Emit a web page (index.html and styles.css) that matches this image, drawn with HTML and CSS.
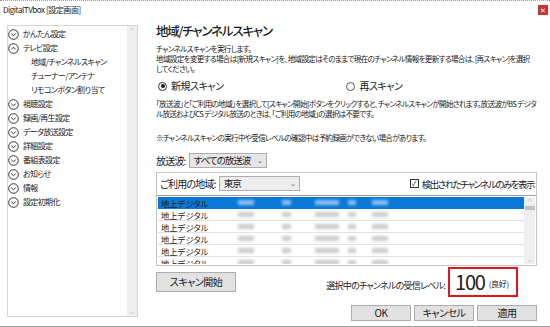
FILE: index.html
```html
<!DOCTYPE html>
<html lang="ja">
<head>
<meta charset="UTF-8">
<title>DigitalTVbox [設定画面]</title>
<link rel="stylesheet" href="styles.css">
</head>
<body>
<div class="window">
  <div class="titlebar">
    <span class="title">DigitalTVbox [設定画面]</span>
    <span class="close">&#x2715;</span>
  </div>

  <div class="content">
    <div class="nav">
      <ul class="nav-list">
        <li class="nav-item"><svg class="ico" viewBox="0 0 11 11"><circle cx="5.5" cy="5.5" r="4.8"/><path d="M3.2 4.5 5.5 6.8 7.8 4.5"/></svg>かんたん設定</li>
        <li class="nav-item"><svg class="ico" viewBox="0 0 11 11"><circle cx="5.5" cy="5.5" r="4.8"/><path d="M3.2 6.5 5.5 4.2 7.8 6.5"/></svg>テレビ設定</li>
        <li class="nav-item sub">地域/チャンネルスキャン</li>
        <li class="nav-item sub">チューナー/アンテナ</li>
        <li class="nav-item sub">リモコンボタン割り当て</li>
        <li class="nav-item"><svg class="ico" viewBox="0 0 11 11"><circle cx="5.5" cy="5.5" r="4.8"/><path d="M3.2 4.5 5.5 6.8 7.8 4.5"/></svg>視聴設定</li>
        <li class="nav-item"><svg class="ico" viewBox="0 0 11 11"><circle cx="5.5" cy="5.5" r="4.8"/><path d="M3.2 4.5 5.5 6.8 7.8 4.5"/></svg>録画/再生設定</li>
        <li class="nav-item"><svg class="ico" viewBox="0 0 11 11"><circle cx="5.5" cy="5.5" r="4.8"/><path d="M3.2 4.5 5.5 6.8 7.8 4.5"/></svg>データ放送設定</li>
        <li class="nav-item"><svg class="ico" viewBox="0 0 11 11"><circle cx="5.5" cy="5.5" r="4.8"/><path d="M3.2 4.5 5.5 6.8 7.8 4.5"/></svg>詳細設定</li>
        <li class="nav-item"><svg class="ico" viewBox="0 0 11 11"><circle cx="5.5" cy="5.5" r="4.8"/><path d="M3.2 4.5 5.5 6.8 7.8 4.5"/></svg>番組表設定</li>
        <li class="nav-item"><svg class="ico" viewBox="0 0 11 11"><circle cx="5.5" cy="5.5" r="4.8"/><path d="M3.2 4.5 5.5 6.8 7.8 4.5"/></svg>お知らせ</li>
        <li class="nav-item"><svg class="ico" viewBox="0 0 11 11"><circle cx="5.5" cy="5.5" r="4.8"/><path d="M3.2 4.5 5.5 6.8 7.8 4.5"/></svg>情報</li>
        <li class="nav-item"><svg class="ico" viewBox="0 0 11 11"><circle cx="5.5" cy="5.5" r="4.8"/><path d="M3.2 4.5 5.5 6.8 7.8 4.5"/></svg>設定初期化</li>
      </ul>
      <div class="vscroll">
        <span class="arrow">&#x2303;</span>
        <span class="arrow">&#x2304;</span>
      </div>
    </div>

    <div class="main">
      <h1>地域/チャンネルスキャン</h1>
      <p class="intro">チャンネルスキャンを実行します。<br>地域設定を変更する場合は[新規スキャン]を、地域設定はそのままで現在のチャンネル情報を更新する場合は、[再スキャン]を選択<br>してください。</p>

      <div class="radios">
        <label class="radio checked"><span class="dot"></span>新規スキャン</label>
        <label class="radio"><span class="dot"></span>再スキャン</label>
      </div>

      <p class="desc">「放送波」と「ご利用の地域」を選択して[スキャン開始]ボタンをクリックすると、チャンネルスキャンが開始されます。放送波がBS デジタ<br>ル放送およびCS デジタル放送のときは、「ご利用の地域」の選択は不要です。</p>
      <p class="note">※チャンネルスキャンの実行中や受信レベルの確認中は予約録画ができない場合があります。</p>

      <div class="field">
        <span class="label">放送波:</span>
        <span class="select wide">すべての放送波<span class="caret">&#x2304;</span></span>
      </div>

      <div class="group">
        <div class="group-head">
          <span class="label">ご利用の地域:</span>
          <span class="select">東京<span class="caret">&#x2304;</span></span>
          <label class="check"><span class="box">&#x2713;</span>検出されたチャンネルのみを表示</label>
        </div>
        <div class="list">
          <div class="rows">
            <div class="row selected"><span class="cell">地上デジタル</span><span class="blur b1"></span><span class="blur b2"></span><span class="blur b3"></span><span class="blur b4"></span><span class="blur b5"></span></div>
            <div class="row"><span class="cell">地上デジタル</span><span class="blur b1"></span><span class="blur b2"></span><span class="blur b3"></span><span class="blur b4"></span><span class="blur b5"></span></div>
            <div class="row"><span class="cell">地上デジタル</span><span class="blur b1"></span><span class="blur b2"></span><span class="blur b3"></span><span class="blur b4"></span><span class="blur b5"></span></div>
            <div class="row"><span class="cell">地上デジタル</span><span class="blur b1"></span><span class="blur b2"></span><span class="blur b3"></span><span class="blur b4"></span><span class="blur b5"></span></div>
            <div class="row"><span class="cell">地上デジタル</span><span class="blur b1"></span><span class="blur b2"></span><span class="blur b3"></span><span class="blur b4"></span><span class="blur b5"></span></div>
            <div class="row"><span class="cell">地上デジタル</span><span class="blur b1"></span><span class="blur b2"></span><span class="blur b3"></span><span class="blur b4"></span><span class="blur b5"></span></div>
          </div>
          <div class="vscroll small">
            <span class="arrow">&#x2303;</span>
            <span class="thumb"></span>
            <span class="arrow">&#x2304;</span>
          </div>
        </div>
      </div>

      <div class="scan-row">
        <button class="btn scan">スキャン開始</button>
        <div class="level">
          <span class="level-label">選択中のチャンネルの受信レベル:</span>
          <span class="level-box"><span class="num">100</span><span class="state">(良好)</span></span>
        </div>
      </div>

      <div class="actions">
        <button class="btn">OK</button>
        <button class="btn">キャンセル</button>
        <button class="btn">適用</button>
      </div>
    </div>
  </div>
</div>
</body>
</html>
```

FILE: styles.css
```css
* {
  box-sizing: border-box;
}

body {
  margin: 0;
  background: #ffffff;
  font-family: "Noto Sans CJK JP", sans-serif;
  font-feature-settings: "palt";
  color: #1a1a1a;
}

.window {
  width: 550px;
  height: 327px;
  border-top: 1px dotted #9a9a9a;
  border-bottom: 1px solid #a0a0a0;
  overflow: hidden;
}

.titlebar {
  height: 17px;
  display: flex;
  align-items: center;
  justify-content: space-between;
  padding: 0 2px 0 3px;
}

.title {
  font-size: 8px;
  line-height: 12px;
  letter-spacing: -0.45px;
}

.close {
  width: 10px;
  height: 10px;
  background: #c8333a;
  color: #fff;
  font-size: 7px;
  line-height: 10px;
  display: flex;
  align-items: center;
  justify-content: center;
}

.content {
  display: flex;
  padding-top: 7px;
}

/* left tree */
.nav {
  margin-left: 7px;
  width: 131px;
  height: 292px;
  border: 1px solid #d4d4d4;
  display: flex;
}

.nav-list {
  list-style: none;
  margin: 0;
  padding: 1px 0 0 0;
  flex: 1;
}

.nav-item {
  height: 14px;
  display: flex;
  align-items: center;
  font-size: 8px;
  line-height: 12px;
  letter-spacing: -0.65px;
  white-space: nowrap;
}

.nav-item.sub {
  padding-left: 23px;
}

.ico {
  width: 11px;
  height: 11px;
  margin-right: 4px;
  fill: none;
  stroke: #333;
  stroke-width: 1;
}

.vscroll {
  width: 10px;
  background: #efefef;
  display: flex;
  flex-direction: column;
  justify-content: space-between;
  align-items: center;
  color: #b5b5b5;
  font-size: 7px;
  line-height: 9px;
}

/* right pane */
.main {
  margin-left: 18px;
  width: 381px;
}

h1 {
  margin: -1px 0 0 0;
  height: 14px;
  font-size: 12.5px;
  font-weight: 500;
  line-height: 14px;
  letter-spacing: -1.2px;
}

.intro,
.desc,
.note {
  margin: 0;
  font-size: 7.6px;
  line-height: 10px;
  letter-spacing: -0.7px;
  white-space: nowrap;
}

.intro {
  margin-top: 6px;
  height: 30px;
}

.radios {
  display: flex;
  height: 14px;
  align-items: center;
  margin-top: 5px;
  font-size: 10px;
  line-height: 14px;
  letter-spacing: -0.5px;
}

.radio {
  display: flex;
  align-items: center;
  margin-left: 2px;
}

.radio + .radio {
  margin-left: 123px;
}

.dot {
  width: 9px;
  height: 9px;
  border: 1px solid #333;
  border-radius: 50%;
  margin-right: 4px;
  position: relative;
}

.radio + .radio .dot {
  border-color: #555;
}

.radio.checked .dot::after {
  content: "";
  position: absolute;
  left: 1.5px;
  top: 1.5px;
  width: 4px;
  height: 4px;
  border-radius: 50%;
  background: #1a1a1a;
}

.desc {
  margin-top: 6px;
  height: 20px;
}

.note {
  margin-top: 14px;
  height: 10px;
}

.field {
  display: flex;
  align-items: center;
  margin-top: 10px;
  height: 15px;
}

.label {
  font-size: 10px;
  line-height: 14px;
  margin-right: 3px;
  letter-spacing: -0.8px;
  white-space: nowrap;
}

.select {
  height: 15px;
  width: 81px;
  border: 1px solid #adadad;
  background: #e6e6e6;
  font-size: 9.5px;
  line-height: 13px;
  white-space: nowrap;
  display: flex;
  align-items: center;
  justify-content: space-between;
  padding: 0 4px 0 4px;
  letter-spacing: -1px;
}

.select.wide {
  width: 78px;
}

.caret {
  font-size: 7px;
  color: #555;
}

.group {
  margin-top: 4px;
  border: 1px solid #c4c4c4;
  height: 94px;
  display: flex;
  flex-direction: column;
}

.group-head {
  display: flex;
  align-items: center;
  height: 22px;
  padding: 0 2px 1px 3px;
}

.group-head .select {
  width: 81px;
  background: #ededed;
}

.check {
  margin-left: auto;
  display: flex;
  align-items: center;
  font-size: 9.5px;
  line-height: 14px;
  letter-spacing: -1.5px;
  white-space: nowrap;
}

.box {
  width: 9px;
  height: 9px;
  border: 1px solid #333;
  font-size: 7px;
  line-height: 7px;
  display: flex;
  align-items: center;
  justify-content: center;
  margin-right: 3px;
  letter-spacing: 0;
}

.list {
  flex: 1;
  border-top: 1px solid #9c9c9c;
  display: flex;
  padding: 1px;
  overflow: hidden;
}

.rows {
  flex: 1;
  overflow: hidden;
}

.row {
  height: 12px;
  box-shadow: inset 0 -1px 0 #e3e3e3;
  display: flex;
  align-items: center;
  position: relative;
  white-space: nowrap;
}

.row.selected {
  background: #0a78d6;
  box-shadow: none;
}

.cell {
  width: 64px;
  height: 12px;
  padding-left: 3px;
  font-size: 8.3px;
  line-height: 12px;
  letter-spacing: 0;
  background: #fff;
  box-shadow: inset 0 -1px 0 #e3e3e3;
}

.row.selected .cell {
  background: #0a78d6;
  box-shadow: none;
}

.blur {
  position: absolute;
  top: 3px;
  height: 5px;
  background: #cdcdcd;
  filter: blur(1.5px);
}

.row.selected .blur {
  background: #8fc0ee;
}

.b1 { left: 80px; width: 16px; }
.b2 { left: 124px; width: 9px; }
.b3 { left: 157px; width: 24px; }
.b4 { left: 190px; width: 8px; }
.b5 { left: 214px; width: 16px; }

.vscroll.small {
  width: 11px;
  justify-content: flex-start;
}

.vscroll.small .arrow:last-child {
  margin-top: auto;
}

.thumb {
  width: 10px;
  height: 4px;
  background: #c2c2c2;
}

.scan-row {
  display: flex;
  align-items: center;
  justify-content: space-between;
  height: 31px;
}

.btn {
  font-family: inherit;
  font-feature-settings: "palt";
  background: #e1e1e1;
  border: 1px solid #adadad;
  color: #1a1a1a;
  font-size: 10px;
  line-height: 12px;
  letter-spacing: -0.5px;
  padding: 0;
  height: 16px;
}

.scan {
  width: 80px;
  height: 20px;
}

.level {
  display: flex;
  align-items: center;
  margin-right: 19px;
}

.level-label {
  font-size: 9px;
  line-height: 12px;
  letter-spacing: -0.75px;
  margin-top: 9px;
  margin-right: 3px;
  white-space: nowrap;
}

.level-box {
  width: 70px;
  height: 30px;
  border: 2px solid #e3141f;
  display: flex;
  align-items: center;
  padding-left: 5px;
}

.num {
  font-size: 20px;
  line-height: 24px;
  letter-spacing: -1.2px;
}

.state {
  font-size: 8px;
  line-height: 12px;
  margin-left: 4px;
  margin-top: 5px;
  letter-spacing: -0.3px;
}

.actions {
  display: flex;
  justify-content: flex-end;
  gap: 3px;
  margin-top: 8px;
}

.actions .btn {
  width: 60px;
}
```
